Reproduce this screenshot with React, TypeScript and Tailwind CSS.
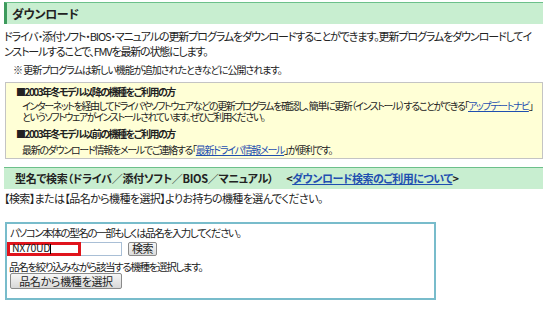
import React from 'react';

const jp = "font-['Noto_Sans_CJK_JP','Noto_Sans',sans-serif] [font-feature-settings:'palt']";

const Link = ({ children }: { children: React.ReactNode }) => (
  <a href="#" className="text-[#1f4fb0] underline underline-offset-1">
    {children}
  </a>
);

export default function App() {
  return (
    <div className={`${jp} w-[548px] h-[318px] overflow-hidden bg-white text-[#222] leading-none`}>
      {/* ダウンロード header */}
      <div className="ml-[4px] mr-[5px] mt-[2px] h-[22px] flex items-center border-t border-[#6cc08a] border-l-[3px] border-l-[#3d9a5c] bg-[#c8eed0] pl-[5px]">
        <span className="text-[12px] font-bold tracking-[-0.3px]">ダウンロード</span>
      </div>

      {/* intro */}
      <div className="px-[4px] pt-[7px] whitespace-nowrap">
        <p className="h-[15px] text-[11px] tracking-[-1.1px]">
          ドライバ・添付ソフト・BIOS・マニュアルの更新プログラムをダウンロードすることができます。更新プログラムをダウンロードしてイ
        </p>
        <p className="h-[15px] text-[11px] tracking-[-1.2px]">ンストールすることで、FMVを最新の状態にします。</p>
        <p className="mt-[4px] pl-[9px] text-[10px] tracking-[-1px]">※ 更新プログラムは新しい機能が追加されたときなどに公開されます。</p>
      </div>

      {/* yellow notice box */}
      <div className="ml-[5px] mr-[5px] mt-[7px] h-[77px] border border-[#c4c4c4] bg-[#ffffd6] pl-[10px] pt-[4px] whitespace-nowrap text-[10px]">
        <p className="font-bold tracking-[-1.5px]">■2003年冬モデル以降の機種をご利用の方</p>
        <div className="pl-[6px] pt-[3px] leading-[11px]">
          <p className="tracking-[-1.4px]">
            インターネットを経由してドライバやソフトウェアなどの更新プログラムを確認し、簡単に更新（インストール）することができる「<Link>アップデートナビ</Link>」
          </p>
          <p className="tracking-[-1.4px]">というソフトウェアがインストールされています。ぜひご利用ください。</p>
        </div>
        <p className="font-bold tracking-[-1.5px] mt-[7px]">■2003年冬モデル以前の機種をご利用の方</p>
        <p className="pl-[6px] pt-[6px] tracking-[-1.3px]">
          最新のダウンロード情報をメールでご連絡する「<Link>最新ドライバ情報メール</Link>」が便利です。
        </p>
      </div>

      {/* 型名で検索 header */}
      <div className="ml-[4px] mr-[5px] mt-[8px] h-[22px] flex items-center border-t border-[#6cc08a] bg-[#c8eed0] pl-[11px] whitespace-nowrap">
        <span className="text-[11px] font-bold tracking-[-0.3px]">型名で検索（ドライバ／添付ソフト／BIOS／マニュアル）</span>
        <span className="ml-[13px] text-[11px] font-bold tracking-[-0.5px]">
          &lt;<Link>ダウンロード検索のご利用について</Link>&gt;
        </span>
      </div>

      <p className="px-[4px] pt-[4px] text-[11px] tracking-[-0.6px] whitespace-nowrap">
        【検索】または【品名から機種を選択】よりお持ちの機種を選んでください。
      </p>

      {/* search form */}
      <div className="ml-[5px] mt-[18px] w-[431px] h-[78px] border-2 border-[#78bccb] pt-[4px] text-[10.5px] whitespace-nowrap">
        <p className="pl-[3px] tracking-[-1.4px]">パソコン本体の型名の一部もしくは品名を入力してください。</p>
        <div className="flex items-center gap-[6px] mt-[3px]">
          <div className="relative w-[115px] h-[14px] border border-[#a9bfd6] bg-white">
            <div className="absolute left-[-1px] top-[-1px] w-[74px] h-[14px] border-[3px] border-[#e0141c] flex items-center pl-[2px]">
              <span className="text-[10.5px] text-[#1a1a1a] tracking-[-0.3px]">NX70UD</span>
              <span className="w-px h-[10px] bg-black"></span>
            </div>
          </div>
          <button className="h-[14px] px-[3px] border border-[#8a8a8a] rounded-[2px] bg-gradient-to-b from-[#f6f6f6] to-[#dcdcdc] text-[11px] leading-none tracking-[-0.5px]">
            検索
          </button>
        </div>
        <p className="mt-[6px] pl-[2px] tracking-[-1.35px]">品名を絞り込みながら該当する機種を選択します。</p>
        <button className="mt-[1px] ml-[3px] w-[112px] h-[16px] border border-[#8a8a8a] rounded-[2px] bg-gradient-to-b from-[#f6f6f6] to-[#d8d8d8] text-[11px] leading-none tracking-[-0.3px]">
          品名から機種を選択
        </button>
      </div>
    </div>
  );
}
